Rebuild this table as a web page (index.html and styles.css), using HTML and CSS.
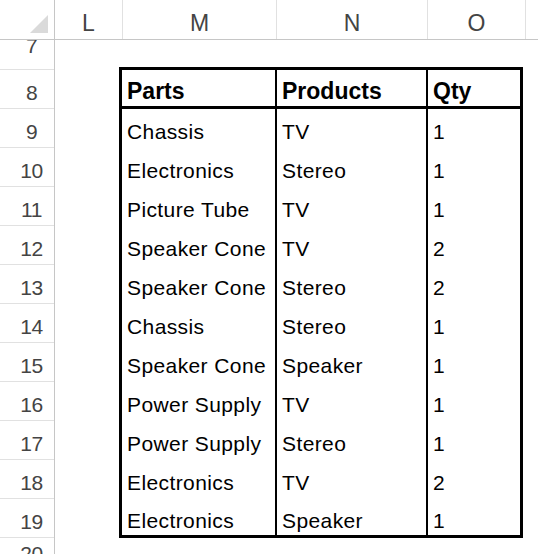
FILE: index.html
```html
<!DOCTYPE html>
<html>
<head>
<meta charset="utf-8">
<link rel="stylesheet" href="styles.css">
</head>
<body>
<div class="sheet">
  <div class="colheads">
    <div class="corner">
      <svg class="selall" width="54" height="39" viewBox="0 0 54 39"><polygon points="48,15 48,33 30,33" fill="#dadada"/></svg>
    </div>
    <div class="ch ch-l">L</div>
    <div class="ch ch-m">M</div>
    <div class="ch ch-n">N</div>
    <div class="ch ch-o">O</div>
    <div class="ch ch-p"></div>
  </div>
  <div class="grid">
    <div class="rowheads">
      <div class="rh rh-7">7</div>
      <div class="rh">8</div>
      <div class="rh">9</div>
      <div class="rh">10</div>
      <div class="rh">11</div>
      <div class="rh">12</div>
      <div class="rh">13</div>
      <div class="rh">14</div>
      <div class="rh">15</div>
      <div class="rh">16</div>
      <div class="rh">17</div>
      <div class="rh">18</div>
      <div class="rh">19</div>
      <div class="rh rh-20">20</div>
    </div>
    <div class="cells">
      <table class="data">
        <colgroup>
          <col class="col-m">
          <col class="col-n">
          <col class="col-o">
        </colgroup>
        <thead>
          <tr><th>Parts</th><th class="sep">Products</th><th class="sep">Qty</th></tr>
        </thead>
        <tbody>
          <tr><td>Chassis</td><td class="sep">TV</td><td class="sep">1</td></tr>
          <tr><td>Electronics</td><td class="sep">Stereo</td><td class="sep">1</td></tr>
          <tr><td>Picture Tube</td><td class="sep">TV</td><td class="sep">1</td></tr>
          <tr><td>Speaker Cone</td><td class="sep">TV</td><td class="sep">2</td></tr>
          <tr><td>Speaker Cone</td><td class="sep">Stereo</td><td class="sep">2</td></tr>
          <tr><td>Chassis</td><td class="sep">Stereo</td><td class="sep">1</td></tr>
          <tr><td>Speaker Cone</td><td class="sep">Speaker</td><td class="sep">1</td></tr>
          <tr><td>Power Supply</td><td class="sep">TV</td><td class="sep">1</td></tr>
          <tr><td>Power Supply</td><td class="sep">Stereo</td><td class="sep">1</td></tr>
          <tr><td>Electronics</td><td class="sep">TV</td><td class="sep">2</td></tr>
          <tr class="last"><td>Electronics</td><td class="sep">Speaker</td><td class="sep">1</td></tr>
        </tbody>
      </table>
    </div>
  </div>
</div>
</body>
</html>
```

FILE: styles.css
```css
html, body {
  margin: 0;
  padding: 0;
  background: #ffffff;
}

.sheet {
  width: 547px;
  height: 554px;
  overflow: hidden;
  font-family: "Liberation Sans", Arial, sans-serif;
}

.colheads {
  display: flex;
  width: 538px;
  height: 39px;
  border-bottom: 1px solid #c6c6c6;
}

.corner {
  width: 54px;
  flex: none;
  border-right: 1px solid #c6c6c6;
}

.selall {
  display: block;
}

.ch {
  flex: none;
  box-sizing: border-box;
  border-right: 1px solid #e1e1e1;
  text-align: center;
  font-size: 23px;
  color: #444444;
  padding-top: 8px;
  line-height: 31px;
}

.ch-l { width: 68px; }
.ch-m { width: 154px; }
.ch-n { width: 151px; }
.ch-o { width: 98px; }
.ch-p { width: 12px; border-right: none; }

.grid {
  display: flex;
}

.rowheads {
  width: 54px;
  flex: none;
  border-right: 1px solid #c6c6c6;
}

.rh {
  box-sizing: border-box;
  height: 39px;
  border-bottom: 1px solid #e1e1e1;
  text-align: center;
  padding-left: 9px;
  padding-top: 7px;
  line-height: 31px;
  font-size: 21px;
  letter-spacing: -0.5px;
  color: #444444;
  overflow: hidden;
}

.rh-7 {
  height: 30px;
  padding-top: 0;
  line-height: 12px;
}

.rh-20 {
  padding-top: 0;
  border-bottom: none;
}

.cells {
  flex: 1;
  padding-left: 64px;
  padding-top: 27px;
}

.data {
  table-layout: fixed;
  width: 404px;
  border-collapse: separate;
  border-spacing: 0;
  border: 3px solid #000000;
  color: #000000;
}

.col-m { width: 153px; }
.col-n { width: 151px; }
.col-o { width: 94px; }

.data th {
  text-align: left;
  font-weight: bold;
  font-size: 23px;
  padding: 6px 0 0 5px;
  line-height: 30px;
  border-bottom: 3px solid #000000;
  white-space: nowrap;
}

.data td {
  font-size: 21px;
  letter-spacing: 0.4px;
  padding: 7px 0 0 5px;
  line-height: 32px;
  white-space: nowrap;
}

.data tr.last td {
  line-height: 29px;
}

.data .sep {
  border-left: 2px solid #000000;
}
```
